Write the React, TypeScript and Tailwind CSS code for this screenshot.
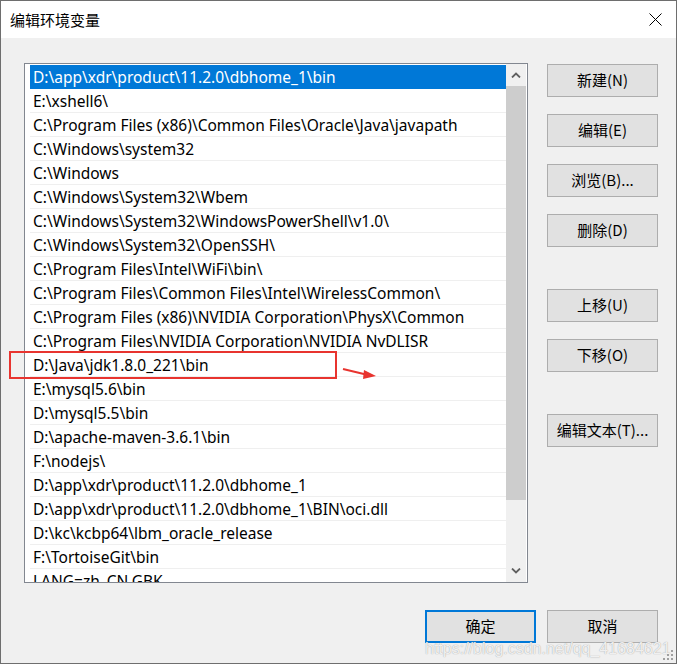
import React from "react";

const paths = [
  "D:\\app\\xdr\\product\\11.2.0\\dbhome_1\\bin",
  "E:\\xshell6\\",
  "C:\\Program Files (x86)\\Common Files\\Oracle\\Java\\javapath",
  "C:\\Windows\\system32",
  "C:\\Windows",
  "C:\\Windows\\System32\\Wbem",
  "C:\\Windows\\System32\\WindowsPowerShell\\v1.0\\",
  "C:\\Windows\\System32\\OpenSSH\\",
  "C:\\Program Files\\Intel\\WiFi\\bin\\",
  "C:\\Program Files\\Common Files\\Intel\\WirelessCommon\\",
  "C:\\Program Files (x86)\\NVIDIA Corporation\\PhysX\\Common",
  "C:\\Program Files\\NVIDIA Corporation\\NVIDIA NvDLISR",
  "D:\\Java\\jdk1.8.0_221\\bin",
  "E:\\mysql5.6\\bin",
  "D:\\mysql5.5\\bin",
  "D:\\apache-maven-3.6.1\\bin",
  "F:\\nodejs\\",
  "D:\\app\\xdr\\product\\11.2.0\\dbhome_1",
  "D:\\app\\xdr\\product\\11.2.0\\dbhome_1\\BIN\\oci.dll",
  "D:\\kc\\kcbp64\\lbm_oracle_release",
  "F:\\TortoiseGit\\bin",
  "LANG=zh_CN.GBK",
];

const WinButton = ({
  label,
  primary,
  className = "",
}: {
  label: string;
  primary?: boolean;
  className?: string;
}) => (
  <button
    className={`w-[111px] h-[33px] flex items-center justify-center bg-[#e1e1e1] text-[15px] text-black ${
      primary ? "border-2 border-[#0078d7]" : "border border-[#adadad]"
    } ${className}`}
  >
    {label}
  </button>
);

const Chevron = ({ up }: { up?: boolean }) => (
  <svg width="10" height="6" viewBox="0 0 10 6" className="block">
    <path
      d={up ? "M1 5.5 L5 1.5 L9 5.5" : "M1 0.5 L5 4.5 L9 0.5"}
      fill="none"
      stroke="#606060"
      strokeWidth="1.8"
    />
  </svg>
);

export default function App() {
  return (
    <div className="relative w-[677px] h-[664px] border border-[#6e6e6e] bg-[#f0f0f0] flex flex-col font-['Noto_Sans','Noto_Sans_CJK_SC',sans-serif] overflow-hidden">
      {/* title bar */}
      <div className="h-[37px] bg-white flex items-center justify-between pl-[9px] pr-[14px] shrink-0">
        <span className="text-[15px] text-black font-['Noto_Sans_CJK_SC',sans-serif] leading-none">
          编辑环境变量
        </span>
        <svg width="13" height="13" viewBox="0 0 13 13">
          <path d="M0.5 0.5 L12.5 12.5 M12.5 0.5 L0.5 12.5" stroke="#000" strokeWidth="1" />
        </svg>
      </div>

      {/* body */}
      <div className="flex pl-[23px] pt-[25px]">
        <div className="w-[504px] h-[520px] border border-[#828790] bg-white flex">
          <div className="flex-1 pl-[5px] pt-[1px] overflow-hidden">
            {paths.map((p, i) => (
              <div
                key={i}
                className={`h-[24px] flex items-center pl-[3px] pt-[2px] text-[15.5px] whitespace-nowrap ${
                  i === 0
                    ? "bg-[#0078d7] text-white border-b border-[#0078d7]"
                    : "text-black border-b border-[#efefef]"
                }`}
              >
                {p}
              </div>
            ))}
          </div>
          <div className="w-[20px] mr-[1px] bg-[#f0f0f0] flex flex-col">
            <div className="h-[22px] flex items-center justify-center">
              <Chevron up />
            </div>
            <div className="h-[414px] bg-[#cdcdcd]" />
            <div className="flex-1" />
            <div className="h-[22px] flex items-center justify-center">
              <Chevron />
            </div>
          </div>
        </div>

        <div className="ml-[19px] pt-[1px] flex flex-col font-['Noto_Sans_CJK_SC',sans-serif]">
          <WinButton label="新建(N)" />
          <WinButton label="编辑(E)" className="mt-[17px]" />
          <WinButton label="浏览(B)..." className="mt-[17px]" />
          <WinButton label="删除(D)" className="mt-[17px]" />
          <WinButton label="上移(U)" className="mt-[42px]" />
          <WinButton label="下移(O)" className="mt-[17px]" />
          <WinButton label="编辑文本(T)..." className="mt-[42px]" />
        </div>
      </div>

      {/* footer */}
      <div className="flex justify-end gap-[11px] pr-[18px] mt-[27px] font-['Noto_Sans_CJK_SC',sans-serif]">
        <WinButton label="确定" primary />
        <WinButton label="取消" />
      </div>

      {/* red annotation */}
      <div className="absolute left-[8px] top-[350px] w-[328px] h-[28px] border-2 border-[#e8342f]" />
      <svg className="absolute left-[341px] top-[364px]" width="36" height="16" viewBox="0 0 36 16">
        <path d="M1 4 L26 10" stroke="#e8342f" strokeWidth="2" fill="none" />
        <path d="M22 5 L34 11 L21 14 Z" fill="#e8342f" />
      </svg>

      {/* watermark */}
      <div className="absolute left-[424px] top-[636px] text-[16px] text-white/85 font-['Liberation_Sans',sans-serif] [text-shadow:0_0_1px_#8a8a8a]">
        https://blog.csdn.net/qq_41684621
      </div>

      {/* resize grip */}
      <svg className="absolute right-[2px] bottom-[2px]" width="11" height="11" viewBox="0 0 11 11">
        <rect x="8" y="0" width="2" height="2" fill="#a0a0a0" />
        <rect x="4" y="4" width="2" height="2" fill="#a0a0a0" />
        <rect x="8" y="4" width="2" height="2" fill="#a0a0a0" />
        <rect x="0" y="8" width="2" height="2" fill="#a0a0a0" />
        <rect x="4" y="8" width="2" height="2" fill="#a0a0a0" />
        <rect x="8" y="8" width="2" height="2" fill="#a0a0a0" />
      </svg>
    </div>
  );
}
